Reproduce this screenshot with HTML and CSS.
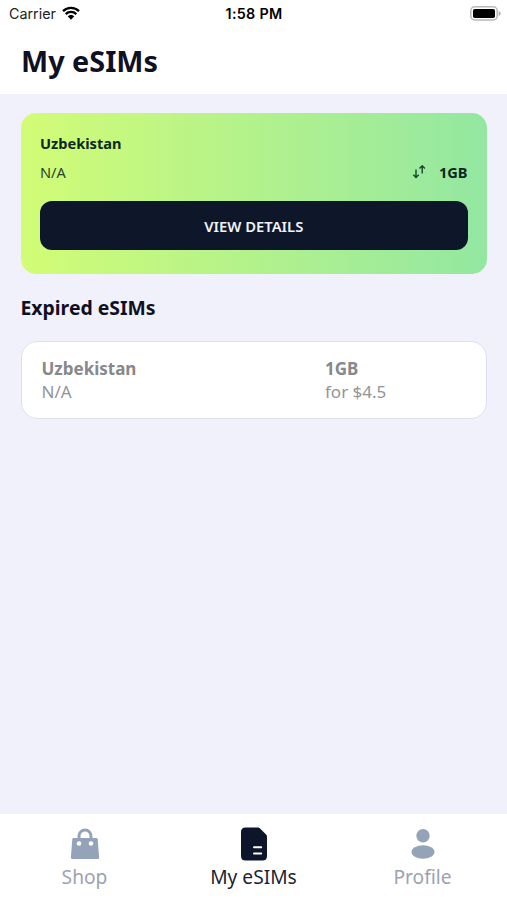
FILE: index.html
```
<!DOCTYPE html>
<html lang="en">
<head>
<meta charset="utf-8">
<title>My eSIMs</title>
<link rel="stylesheet" href="styles.css">
</head>
<body>
<div class="app">
  <div class="status">
    <div class="status-left"><span class="carrier">Carrier</span>
      <svg class="wifi" viewBox="0 0 18 14" width="18" height="14"><path d="M1 5.2A11.5 11.5 0 0 1 17 5.2M3.7 8.1A7.6 7.6 0 0 1 14.3 8.1" fill="none" stroke="#000" stroke-width="2.3"/><path d="M9 13.8 5.7 10.3A4.8 4.8 0 0 1 12.3 10.3Z"/></svg>
    </div>
    <span class="time">1:58 PM</span>
    <div class="status-right"><svg viewBox="0 0 31 15" width="31" height="15"><rect x=".8" y=".8" width="26.4" height="13.2" rx="4" fill="#fff" stroke="#b8b8b8" stroke-width="1.5"/><rect x="3" y="3" width="22" height="9" rx="1.8"/><path d="M28.6 5v5q2.2-1 2.2-2.5T28.6 5Z" fill="#b0b0b0"/></svg></div>
  </div>
  <header class="header"><h1>My eSIMs</h1></header>
  <main class="content">
    <section class="plan">
      <div class="plan-name">Uzbekistan</div>
      <div class="plan-row">
        <span class="plan-id">N/A</span>
        <span class="plan-data"><svg viewBox="0 0 14 14" width="14" height="14"><path d="M4 4.5V12.5M1.3 9.8 4 12.5l2.7-2.7M10.2 8.5V1M7.5 3.5 10.2.8l2.7 2.7" fill="none" stroke="#1c4230" stroke-width="1.4"/></svg><b>1GB</b></span>
      </div>
      <button class="details">VIEW DETAILS</button>
    </section>
    <h2>Expired eSIMs</h2>
    <section class="expired">
      <div><b>Uzbekistan</b><span>N/A</span></div>
      <div><b>1GB</b><span>for $4.5</span></div>
    </section>
  </main>
  <nav class="tabs">
    <a class="tab"><svg viewBox="0 0 30 34" width="30" height="34"><path d="M9 13V9a6 6 0 0 1 12 0v4" fill="none" stroke="#94a3b8" stroke-width="3"/><path d="M3.8 11h22.4q1.3 0 1.5 1.3l1.4 18.2q.1 1.5-1.4 1.5H2.3q-1.5 0-1.4-1.5l1.4-18.2Q2.5 11 3.8 11Z" fill="#94a3b8"/><circle cx="9" cy="16.5" r="2.3" fill="#fff"/><circle cx="21" cy="16.5" r="2.3" fill="#fff"/></svg><span>Shop</span></a>
    <a class="tab active"><svg viewBox="0 0 26 34" width="26" height="34"><path d="M4.5.5h12.5q1 0 1.8.8l6.3 6.3q.9.9.9 2V29q0 4.5-4.5 4.5h-17Q0 33.5 0 29V5Q0 .5 4.5.5Z" fill="#0c1529"/><path d="M13 20.3h7.2M13 26.5h7.2" stroke="#fff" stroke-width="2" stroke-linecap="round"/></svg><span>My eSIMs</span></a>
    <a class="tab"><svg viewBox="0 0 24 34" width="24" height="34"><circle cx="12" cy="8.7" r="6.7" fill="#94a3b8"/><ellipse cx="12" cy="25" rx="11.5" ry="6.7" fill="#94a3b8"/></svg><span>Profile</span></a>
  </nav>
</div>
</body>
</html>
```
FILE: styles.css
```
* { box-sizing: border-box; }
body { margin: 0; font-family: "Noto Sans", sans-serif; color: #0f1024; background: #f0f1fa; }
svg { display: block; flex: none; }
.app { height: 900px; display: flex; flex-direction: column; }
.status { height: 28px; background: #fff; display: grid; grid-template-columns: 1fr auto 1fr; align-items: center; padding: 0 6px 2px 9px; font: 14.3px Inter, sans-serif; color: #222; }
.status-left { display: flex; align-items: center; gap: 6px; }
.time { font-weight: 600; color: #000; letter-spacing: .3px; margin-right: 2px; }
.status-right { display: flex; justify-content: flex-end; }
.header { height: 66px; background: #fff; padding: 12px 21px 0; }
h1 { margin: 0; font-size: 28.8px; line-height: 42px; font-weight: 700; }
.content { flex: 1; padding: 19px 20px 0 20.5px; }
.plan { height: 161px; border-radius: 15px; padding: 20px 19.5px 24px; background: linear-gradient(90deg, #d2fc76, #93e7a2); font-size: 14.6px; color: #0c2820; }
.plan-name { font-weight: 700; line-height: 20px; }
.plan-row { display: flex; justify-content: space-between; align-items: center; line-height: 20px; margin: 9px 0 19px; }
.plan-id { color: #2c4530; }
.plan-data { display: flex; align-items: center; gap: 13px; }
.details { display: block; width: 100%; height: 49px; border: 0; border-radius: 12px; background: #0e172a; color: #f0f3fa; font: 600 14.8px "Noto Sans", sans-serif; padding: 1px 0 0; }
h2 { font-size: 19.4px; line-height: 28px; margin: 20px 0 18.5px; }
.expired { height: 78px; border: 1.5px solid #dedef8; border-radius: 16px; background: #fff; display: grid; grid-template-columns: 283.5px 1fr; padding: 15px 20px; color: #929497; font-size: 17px; line-height: 23.5px; }
.expired b { display: block; color: #86888c; }
.expired span { display: block; }
.tabs { height: 86px; background: #fff; display: grid; grid-template-columns: repeat(3, 1fr); }
.tab { display: flex; flex-direction: column; align-items: center; padding-top: 13px; color: #9ca3af; font-size: 19.2px; line-height: 28px; gap: 2px; }
.tab.active { color: #1c2434; }
```
